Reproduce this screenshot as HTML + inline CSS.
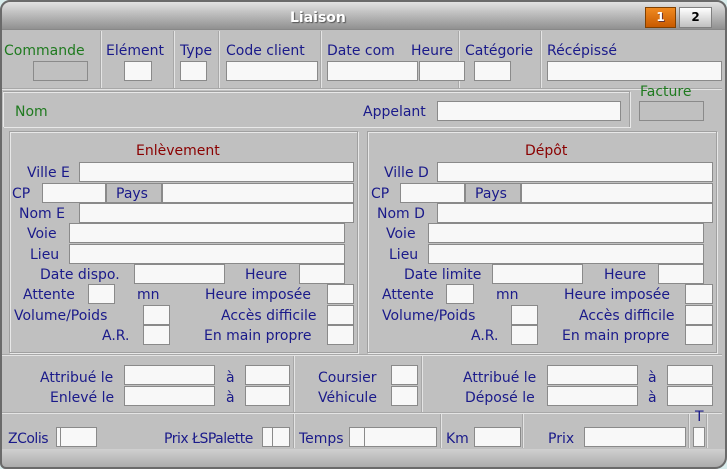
<!DOCTYPE html>
<html><head><meta charset="utf-8"><style>
*{margin:0;padding:0;box-sizing:border-box}
body{width:727px;height:469px;background:#d8ecec;overflow:hidden;font-family:"DejaVu Sans","Liberation Sans",sans-serif;font-size:14px;color:#1a1a8a}
#w{position:absolute;left:0;top:0;width:727px;height:469px;background:#c0c0c0;border-radius:10px 10px 12px 6px;overflow:hidden}
#b{position:absolute;left:0;top:0;width:727px;height:469px;border:2px solid #6a6a6a;border-radius:10px 10px 12px 6px}
.t{position:absolute;white-space:nowrap;line-height:16px;height:16px;margin-top:2px}
.i{position:absolute;background:#f8f8f8;border:1px solid #8a8a8a;height:20px}
.g{background:#c0c0c0}
.v{position:absolute;width:2px;border-left:1px solid #a8a8a8;border-right:1px solid #e4e4e4}
.h{position:absolute;height:2px;border-top:1px solid #a8a8a8;border-bottom:1px solid #e4e4e4}
.box{position:absolute;border:1px solid #a0a0a0;box-shadow:inset 1px 1px 0 #e8e8e8,1px 1px 0 #e8e8e8}
.gr{color:#1f7a1f}
.red{color:#8a0000}
</style></head><body><div id="w">
<div style="position:absolute;left:0;top:0;width:727px;height:30px;background:linear-gradient(#e8e8e8,#c4c4c4 40%,#909090);border-bottom:1px solid #888"></div>
<div class="t" style="left:290px;top:8px;color:#fff;font-weight:bold;font-size:14px;text-shadow:1px 1px 1px #555">Liaison</div>
<div style="position:absolute;left:645px;top:7px;width:31px;height:21px;background:linear-gradient(#f08a20,#c85a00);border:1px solid #804000;color:#fff;font-weight:bold;font-size:12px;text-align:center;line-height:19px;text-shadow:1px 1px 0 #633">1</div>
<div style="position:absolute;left:679px;top:7px;width:33px;height:21px;background:linear-gradient(#fff,#c0c0c0);border:1px solid #808080;color:#000;font-weight:bold;font-size:12px;text-align:center;line-height:19px">2</div>

<div class="v" style="left:100px;top:31px;height:58px"></div>
<div class="v" style="left:173px;top:31px;height:58px"></div>
<div class="v" style="left:218px;top:31px;height:58px"></div>
<div class="v" style="left:320px;top:31px;height:58px"></div>
<div class="v" style="left:458px;top:31px;height:58px"></div>
<div class="v" style="left:540px;top:31px;height:58px"></div>
<div class="h" style="left:2px;top:88px;width:720px"></div>
<div class="t gr" style="left:4px;top:41px">Commande</div><div class="i g" style="left:33px;top:61px;width:55px"></div>
<div class="t" style="left:106px;top:41px">Elément</div><div class="i" style="left:124px;top:61px;width:28px"></div>
<div class="t" style="left:180px;top:41px">Type</div><div class="i" style="left:180px;top:61px;width:27px"></div>
<div class="t" style="left:226px;top:41px">Code client</div><div class="i" style="left:226px;top:61px;width:92px"></div>
<div class="t" style="left:327px;top:41px">Date com</div><div class="i" style="left:327px;top:61px;width:91px"></div>
<div class="t" style="left:411px;top:41px">Heure</div><div class="i" style="left:419px;top:61px;width:46px"></div>
<div class="t" style="left:465px;top:41px">Catégorie</div><div class="i" style="left:474px;top:61px;width:37px"></div>
<div class="t" style="left:547px;top:41px">Récépissé</div><div class="i" style="left:547px;top:61px;width:175px"></div>

<div class="box" style="left:3px;top:91px;width:627px;height:36px;border-bottom:none;border-left:none"></div>
<div class="t gr" style="left:15px;top:102px">Nom</div>
<div class="t" style="left:363px;top:102px">Appelant</div><div class="i" style="left:437px;top:101px;width:184px"></div>
<div class="t gr" style="left:640px;top:82px">Facture</div><div class="i g" style="left:639px;top:101px;width:65px"></div>

<div class="box" style="left:9px;top:131px;width:349px;height:222px"></div>
<div class="t red" style="left:136px;top:141px">Enlèvement</div>
<div class="t" style="left:27px;top:163px">Ville E</div><div class="i" style="left:79px;top:162px;width:275px"></div>
<div class="t" style="left:12px;top:184px">CP</div><div class="i" style="left:42px;top:183px;width:64px"></div>
<div class="i g" style="left:106px;top:183px;width:56px"></div><div class="t" style="left:116px;top:184px">Pays</div>
<div class="i" style="left:162px;top:183px;width:192px"></div>
<div class="t" style="left:19px;top:204px">Nom E</div><div class="i" style="left:79px;top:203px;width:275px"></div>
<div class="t" style="left:27px;top:224px">Voie</div><div class="i" style="left:69px;top:223px;width:276px"></div>
<div class="t" style="left:30px;top:245px">Lieu</div><div class="i" style="left:69px;top:244px;width:276px"></div>
<div class="t" style="left:40px;top:265px">Date dispo.</div><div class="i" style="left:134px;top:264px;width:91px"></div>
<div class="t" style="left:245px;top:265px">Heure</div><div class="i" style="left:299px;top:264px;width:46px"></div>
<div class="t" style="left:23px;top:285px">Attente</div><div class="i" style="left:88px;top:284px;width:27px"></div>
<div class="t" style="left:137px;top:285px">mn</div>
<div class="t" style="left:205px;top:285px">Heure imposée</div><div class="i" style="left:327px;top:284px;width:27px"></div>
<div class="t" style="left:14px;top:306px">Volume/Poids</div><div class="i" style="left:143px;top:305px;width:27px"></div>
<div class="t" style="left:221px;top:306px">Accès difficile</div><div class="i" style="left:327px;top:305px;width:27px"></div>
<div class="t" style="left:102px;top:326px">A.R.</div><div class="i" style="left:143px;top:325px;width:27px"></div>
<div class="t" style="left:204px;top:326px">En main propre</div><div class="i" style="left:327px;top:325px;width:27px"></div>

<div class="box" style="left:367px;top:131px;width:350px;height:222px"></div>
<div class="t red" style="left:525px;top:141px">Dépôt</div>
<div class="t" style="left:384px;top:163px">Ville D</div><div class="i" style="left:437px;top:162px;width:276px"></div>
<div class="t" style="left:371px;top:184px">CP</div><div class="i" style="left:400px;top:183px;width:65px"></div>
<div class="i g" style="left:465px;top:183px;width:56px"></div><div class="t" style="left:475px;top:184px">Pays</div>
<div class="i" style="left:521px;top:183px;width:192px"></div>
<div class="t" style="left:377px;top:204px">Nom D</div><div class="i" style="left:437px;top:203px;width:276px"></div>
<div class="t" style="left:386px;top:224px">Voie</div><div class="i" style="left:428px;top:223px;width:276px"></div>
<div class="t" style="left:389px;top:245px">Lieu</div><div class="i" style="left:428px;top:244px;width:276px"></div>
<div class="t" style="left:404px;top:265px">Date limite</div><div class="i" style="left:492px;top:264px;width:91px"></div>
<div class="t" style="left:604px;top:265px">Heure</div><div class="i" style="left:658px;top:264px;width:46px"></div>
<div class="t" style="left:382px;top:285px">Attente</div><div class="i" style="left:446px;top:284px;width:28px"></div>
<div class="t" style="left:496px;top:285px">mn</div>
<div class="t" style="left:564px;top:285px">Heure imposée</div><div class="i" style="left:685px;top:284px;width:28px"></div>
<div class="t" style="left:382px;top:306px">Volume/Poids</div><div class="i" style="left:511px;top:305px;width:27px"></div>
<div class="t" style="left:579px;top:306px">Accès difficile</div><div class="i" style="left:685px;top:305px;width:28px"></div>
<div class="t" style="left:471px;top:326px">A.R.</div><div class="i" style="left:511px;top:325px;width:27px"></div>
<div class="t" style="left:562px;top:326px">En main propre</div><div class="i" style="left:685px;top:325px;width:28px"></div>

<div class="h" style="left:2px;top:354px;width:720px"></div>
<div class="v" style="left:293px;top:356px;height:56px"></div>
<div class="v" style="left:421px;top:356px;height:56px"></div>
<div class="h" style="left:2px;top:412px;width:720px"></div>
<div class="t" style="left:40px;top:368px">Attribué le</div><div class="i" style="left:124px;top:365px;width:91px"></div>
<div class="t" style="left:226px;top:368px">à</div><div class="i" style="left:245px;top:365px;width:45px"></div>
<div class="t" style="left:50px;top:388px">Enlevé le</div><div class="i" style="left:124px;top:386px;width:91px"></div>
<div class="t" style="left:226px;top:388px">à</div><div class="i" style="left:245px;top:386px;width:45px"></div>
<div class="t" style="left:318px;top:368px">Coursier</div><div class="i" style="left:391px;top:365px;width:27px"></div>
<div class="t" style="left:318px;top:388px">Véhicule</div><div class="i" style="left:391px;top:386px;width:27px"></div>
<div class="t" style="left:463px;top:368px">Attribué le</div><div class="i" style="left:547px;top:365px;width:91px"></div>
<div class="t" style="left:648px;top:368px">à</div><div class="i" style="left:667px;top:365px;width:46px"></div>
<div class="t" style="left:465px;top:388px">Déposé le</div><div class="i" style="left:547px;top:386px;width:91px"></div>
<div class="t" style="left:648px;top:388px">à</div><div class="i" style="left:667px;top:386px;width:46px"></div>

<div class="v" style="left:293px;top:414px;height:34px"></div>
<div class="v" style="left:440px;top:414px;height:34px"></div>
<div class="v" style="left:522px;top:414px;height:34px"></div>
<div class="v" style="left:688px;top:414px;height:34px"></div>
<div class="v" style="left:706px;top:414px;height:34px"></div>
<div class="t" style="left:8px;top:429px;letter-spacing:-0.5px">ZColis</div><div class="i" style="left:56px;top:427px;width:5px"></div><div class="i" style="left:60px;top:427px;width:37px"></div>
<div class="t" style="left:164px;top:429px;letter-spacing:-0.5px">Prix ŁSPalette</div><div class="i" style="left:262px;top:427px;width:11px"></div><div class="i" style="left:272px;top:427px;width:18px"></div>
<div class="t" style="left:299px;top:429px">Temps</div><div class="i" style="left:349px;top:427px;width:16px"></div><div class="i" style="left:364px;top:427px;width:73px"></div>
<div class="t" style="left:446px;top:429px">Km</div><div class="i" style="left:474px;top:427px;width:47px"></div>
<div class="t" style="left:548px;top:429px">Prix</div><div class="i" style="left:584px;top:427px;width:102px"></div>
<div class="t" style="left:695px;top:407px">T</div><div class="i" style="left:693px;top:427px;width:12px"></div>
<div style="position:absolute;left:0;top:449px;width:727px;height:20px;background:linear-gradient(#d0d0d0,#a8a8a8)"></div>
</div><div id="b"></div></body></html>
